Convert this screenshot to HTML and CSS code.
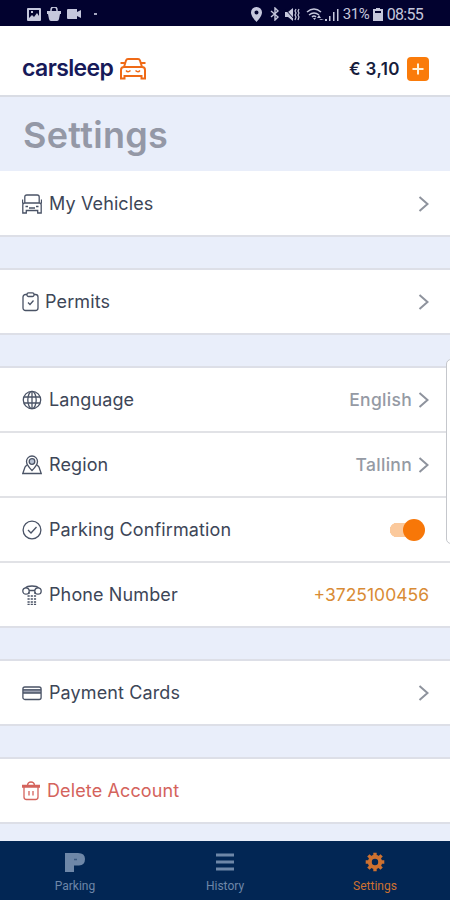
FILE: index.html
```html
<!DOCTYPE html>
<html lang="en">
<head>
<meta charset="utf-8">
<title>Settings</title>
<link rel="stylesheet" href="styles.css">
</head>
<body>
<div class="status">
  <div class="status-left">
    <svg width="14" height="13" viewBox="0 0 14 13"><path fill="currentColor" fill-rule="evenodd" d="M1 0h12a1 1 0 0 1 1 1v11a1 1 0 0 1-1 1H1a1 1 0 0 1-1-1V1a1 1 0 0 1 1-1zm1 2v8l3-3 2 2 3-4 2 3V2zm2 1h2v2H4z"/></svg>
    <svg width="14" height="14" viewBox="0 0 14 14"><path d="M4 5V3a3 3 0 0 1 6 0v2" fill="none" stroke="currentColor" stroke-width="1.5"/><path fill="currentColor" d="M0 4h14v3h-1l-1 5q-.3 2-2 2H4q-1.700 0-2-2L1 7H0z"/></svg>
    <svg width="15" height="10" viewBox="0 0 15 10"><path fill="currentColor" d="M1 0h9v3l4-2v8l-4-2v3H1q-1 0-1-1V1q0-1 1-1z"/></svg>
    <i class="dot"></i>
  </div>
  <div class="status-right">
    <svg width="11" height="15" viewBox="0 0 11 15"><path fill="currentColor" fill-rule="evenodd" d="M5.500 0A5.400 5.400 0 0 0 0 5.500C0 9.500 5.500 15 5.500 15S11 9.500 11 5.500A5.400 5.400 0 0 0 5.500 0zm0 3.400a2 2 0 1 1 0 4 2 2 0 0 1 0-4z"/></svg>
    <svg class="bt" width="10" height="14" viewBox="0 0 10 14"><path fill="none" stroke="currentColor" stroke-width="1.400" d="M1 4l7 6-3 3V1l3 3-7 6"/></svg>
    <svg class="mute" width="15" height="13" viewBox="0 0 15 13"><path fill="currentColor" d="M0 4h3l5-4v13L3 9H0z"/><path d="M0 1l10 11" stroke="#02022f"/><path d="M11 1l-1 2 1 2-1 2 1 2-1 3M14 1l-1 2 1 2-1 2 1 2-1 3" fill="none" stroke="currentColor" stroke-width="1.200"/></svg>
    <svg class="wifi" width="18" height="13" viewBox="0 0 18 13"><path fill="none" stroke="currentColor" stroke-width="1.500" d="M1 4q7-6 14 0M3 7q5-4 10 0M6 9q2-2 4 0"/><path fill="currentColor" d="M7 10h3l-1.500 2zM13 7l2 3h-4zM15 12l-2-1h5z"/></svg>
    <svg class="signal" width="14" height="13" viewBox="0 0 14 13"><path fill="currentColor" d="M0 11h2v2H0zM4 8h1.500v5H4zM8 4h1.500v9H8zM12 1h1.500v12H12z"/></svg>
    <span class="pct">31%</span>
    <svg width="10" height="13" viewBox="0 0 10 13"><path fill="currentColor" fill-rule="evenodd" d="M3 0h4v1h3v12H0V1h3zM2 3v2h6V3z"/></svg>
    <span class="clock">08:55</span>
  </div>
</div>
<header class="header">
  <div class="brand"><span class="brand-name">carsleep</span>
    <svg width="26" height="22" viewBox="0 0 26 22" fill="none" stroke="#ef6a17" stroke-width="2"><path d="M4 9l2-6.500Q6.500 1 8 1h10q1.500 0 2 1.500L22 9M1 20.500V12q0-3 3-3h18q3 0 3 3v8.500h-3.500V18h-17v2.500zM.5 5h4M21.500 5h4"/><path stroke-width="1.500" d="M6 12.500q2 2.500 4.500 0M15.500 12.500q2.500 2.500 4.500 0"/></svg>
  </div>
  <div class="balance"><span class="amount">€ 3,10</span><span class="add"><svg width="12" height="12" viewBox="0 0 12 12"><path d="M6 .5v11M.5 6h11" stroke="#fff3dc" stroke-width="2"/></svg></span></div>
</header>
<main class="content">
  <h1>Settings</h1>
  <section class="group first">
    <div class="row">
      <svg class="icon" viewBox="0 0 20 20"><path d="M2.800 9V3q0-2 2-2h10.400q2 0 2 2v6M.8 19V11q0-2 2-2h14.400q2 0 2 2v8h-3.500v-2.500H4.300V19zM.5 5.500v4M19.500 5.500v4"/><path d="M3.500 12.500h2.500M14 12.500h2.500M7 14h6"/></svg>
      <span class="label">My Vehicles</span><svg class="chev" viewBox="0 0 10 16"><path d="M1 1l8 7-8 7"/></svg>
    </div>
  </section>
  <section class="group">
    <div class="row permits">
      <svg class="icon narrow" viewBox="0 0 17 20"><rect x="1" y="2.500" width="15" height="16" rx="2.500"/><rect x="5" y=".8" width="7" height="3.700" rx="1.500" fill="#fff"/><path d="M6 10.500l2 2 3.500-4"/></svg>
      <span class="label">Permits</span><svg class="chev" viewBox="0 0 10 16"><path d="M1 1l8 7-8 7"/></svg>
    </div>
  </section>
  <section class="group joined">
    <div class="row">
      <svg class="icon" viewBox="0 0 20 20"><circle cx="10" cy="10" r="8.700"/><ellipse cx="10" cy="10" rx="4.200" ry="8.700"/><path d="M10 1v18M2 7h16M2 13h16"/></svg>
      <span class="label">Language</span><span class="value">English</span><svg class="chev" viewBox="0 0 10 16"><path d="M1 1l8 7-8 7"/></svg>
    </div>
    <div class="row">
      <svg class="icon" viewBox="0 0 20 20"><path d="M10 15.500q-5.500-5.500-5.500-9a5.500 5.500 0 0 1 11 0q0 3.500-5.500 9z"/><circle cx="10" cy="6.500" r="2.800" fill="#b9c4d6"/><path d="M4.800 10L3 12 .8 18.500h18.400L17 12l-1.800-2"/></svg>
      <span class="label">Region</span><span class="value">Tallinn</span><svg class="chev" viewBox="0 0 10 16"><path d="M1 1l8 7-8 7"/></svg>
    </div>
    <div class="row">
      <svg class="icon" viewBox="0 0 20 20"><circle cx="10" cy="10" r="8.900"/><path d="M6 10l3 3 5.500-6"/></svg>
      <span class="label">Parking Confirmation</span><span class="toggle"></span>
    </div>
    <div class="row">
      <svg class="icon" viewBox="0 0 20 20"><path d="M3.500 3Q5 1 10 1t6.500 2M7 5.500h6"/><circle cx="4" cy="6" r="3.200"/><circle cx="16" cy="6" r="3.200"/><path d="M7 7v2M13 7v2"/><path stroke-dasharray="2.200 1" d="M5.500 11h9M5.500 14h9M5.500 17h9M5.500 19.300h9"/></svg>
      <span class="label">Phone Number</span><span class="phone">+3725100456</span>
    </div>
  </section>
  <section class="group cards">
    <div class="row">
      <svg class="icon" viewBox="0 0 20 20"><path d="M1 6h18v4H1z" fill="#9aa0b0" stroke="none"/><rect x=".9" y="4" width="18.200" height="12.500" rx="2"/><path d="M1 6.800h18M1 10h18"/></svg>
      <span class="label">Payment Cards</span><svg class="chev" viewBox="0 0 10 16"><path d="M1 1l8 7-8 7"/></svg>
    </div>
  </section>
  <section class="group delete">
    <div class="row danger">
      <svg class="icon trash" viewBox="0 0 18 20"><path d="M0 4.500h18M0 6h18M5.500 4Q6 1 9 1t3.500 3M2 6v10q0 2.500 2.500 2.500h9q2.500 0 2.500-2.500V6M7 10v4.500M11 10v4.500"/></svg>
      <span class="label">Delete Account</span>
    </div>
  </section>
</main>
<nav class="tabs">
  <div class="tab"><svg width="20" height="20" viewBox="0 0 20 20"><path fill="currentColor" d="M0 1h13q7 0 7 6t-6 6.500H9V20H0z"/><path d="M9 7.500h3" stroke="#3c5a80" stroke-width="1.500"/></svg><span>Parking</span></div>
  <div class="tab"><svg width="20" height="20" viewBox="0 0 20 20"><path stroke="currentColor" stroke-width="3" d="M1 3h18M1 10h18M1 17h18"/></svg><span>History</span></div>
  <div class="tab active"><svg width="20" height="20" viewBox="0 0 20 20"><circle cx="10" cy="10" r="5.200" fill="none" stroke="currentColor" stroke-width="4"/><g stroke="currentColor" stroke-width="3.400"><path d="M10 .7v4M10 15.300v4M.7 10h4M15.300 10h4M3.400 3.400l3 3M13.600 13.600l3 3M3.400 16.600l3-3M13.600 6.400l3-3"/></g></svg><span>Settings</span></div>
</nav>
<div class="edge-panel"></div>
</body>
</html>
```
FILE: styles.css
```css
* { box-sizing: border-box; }
body {
  margin: 0;
  width: 450px;
  height: 900px;
  overflow: hidden;
  position: relative;
  display: flex;
  flex-direction: column;
  background: #e9eefa;
  font-family: Inter, sans-serif;
  color: #3d4657;
}
svg { display: block; flex: none; }
.status {
  height: 26px;
  flex: none;
  display: flex;
  justify-content: space-between;
  align-items: center;
  padding: 2px 27px 0;
  background: #02022f;
  color: #c5c7dc;
  font: 16px Roboto, sans-serif;
}
.status-left, .status-right { display: flex; align-items: center; }
.status-left { gap: 6px; }
.dot { width: 3px; height: 2px; margin-left: 6px; background: #a6a8c0; }
.bt { margin-left: 8px; }
.mute { margin-left: 5px; }
.wifi { margin-left: 6px; }
.signal { margin: 0 4px 0 1px; }
.pct { width: 30px; font-size: 15px; letter-spacing: -.4px; }
.clock { margin-left: 4px; letter-spacing: -.7px; }
.header {
  height: 71px;
  flex: none;
  display: flex;
  align-items: center;
  justify-content: space-between;
  padding: 17px 21px 0 22px;
  background: #fff;
  border-bottom: 2px solid #d9dce4;
}
.brand { display: flex; align-items: center; gap: 7px; }
.brand-name { font-size: 23px; font-weight: 600; letter-spacing: -.6px; line-height: 24px; color: #171a59; margin-top: -3px; }
.balance { display: flex; align-items: center; gap: 7px; }
.amount { font-size: 17px; font-weight: 600; letter-spacing: .4px; color: #171d3c; }
.add { width: 22px; height: 24px; border-radius: 4px; background: #fa7b0a; display: grid; place-items: center; }
.content { flex: 1; min-height: 0; display: flex; flex-direction: column; }
h1 { margin: 0; height: 74px; flex: none; padding: 1px 22px 0 23px; font-size: 36px; line-height: 74px; font-weight: 600; letter-spacing: .3px; color: #9498a6; }
.group { flex: none; background: #fff; border-top: 2px solid #dddfe7; border-bottom: 2px solid #dddfe7; margin-bottom: 31px; }
.group.first { border-top: 0; }
.group.first .row { height: 64px; padding-top: 1px; }
.row { height: 63px; display: flex; align-items: center; padding: 0 21px 0 22px; }
.row + .row { border-top: 2px solid #e1e2e6; height: 65px; }
.group.delete { margin-bottom: 0; }
.icon { width: 20px; height: 20px; margin-right: 7px; fill: none; stroke: #4a5366; stroke-width: 1.300; }
.icon.narrow { width: 17px; margin-right: 6px; }
.label { flex: 1; font-size: 18px; letter-spacing: .12px; }
.value { font-size: 17.500px; font-weight: 500; letter-spacing: .3px; color: #959aa4; margin-right: 6px; }
.chev { width: 11px; height: 16px; fill: none; stroke: #8e939d; stroke-width: 2; }
.phone { font-size: 17.500px; color: #d98b35; }
.toggle { width: 35px; height: 22px; margin-right: 4px; display: flex; align-items: center; justify-content: flex-end; background: linear-gradient(#fbc99c, #fbc99c) 8px center / 20px 14px no-repeat, radial-gradient(circle at 7px 11px, #fbc99c 7px, transparent 7.500px); }
.toggle::after { content: ""; width: 22px; height: 22px; border-radius: 50%; background: #f77708; }
.danger { color: #d4635c; }
.danger .icon { width: 18px; stroke: #d4635c; }
.tabs { height: 59px; flex: none; display: grid; grid-template-columns: repeat(3, 1fr); background: #022654; color: #6e87a8; font: 12px Roboto, sans-serif; }
.tab { display: flex; flex-direction: column; align-items: center; padding-top: 11px; gap: 7px; }
.tab.active { color: #ce7130; }
.edge-panel { position: absolute; left: 446px; top: 359px; width: 10px; height: 185px; border: 1px solid #c5c7cc; border-radius: 5px; background: #fff; }
```
